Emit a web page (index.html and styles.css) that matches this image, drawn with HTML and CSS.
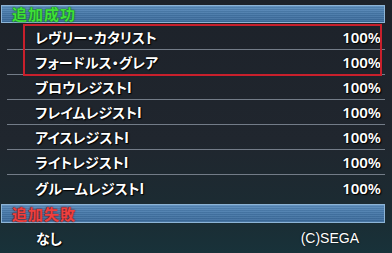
FILE: index.html
```html
<!DOCTYPE html>
<html lang="ja">
<head>
    <meta charset="UTF-8">
    <title>追加結果</title>
    <link rel="stylesheet" href="styles.css">
</head>
<body>
    <div class="panel">
        <div class="bar ok">追加成功</div>

        <div class="list">
            <div class="picked">
                <div class="row"><span class="name">レヴリー・カタリスト</span><span class="rate">100%</span></div>
                <div class="row"><span class="name">フォードルス・グレア</span><span class="rate">100%</span></div>
            </div>
            <div class="row"><span class="name">ブロウレジストI</span><span class="rate">100%</span></div>
            <div class="row"><span class="name">フレイムレジストI</span><span class="rate">100%</span></div>
            <div class="row"><span class="name">アイスレジストI</span><span class="rate">100%</span></div>
            <div class="row"><span class="name">ライトレジストI</span><span class="rate">100%</span></div>
            <div class="row last"><span class="name">グルームレジストI</span><span class="rate">100%</span></div>
        </div>

        <div class="bar ng">追加失敗</div>

        <div class="foot">
            <span class="name">なし</span>
            <span class="copy">(C)SEGA</span>
        </div>
    </div>
</body>
</html>
```

FILE: styles.css
```css
body{
    margin: 0;
    width: 392px;
    height: 253px;
    overflow: hidden;
    background: linear-gradient(180deg, #1d222a 0%, #20262e 55%, #1b2c33 85%, #18323a 100%);
    font-family: "Noto Sans CJK JP", "Noto Sans", sans-serif;
    color: #fff;
}
.panel{
    padding-top: 5px;
}

/* section bars */
.bar{
    height: 16px;
    margin: 0 7px 0 1px;
    padding-left: 10px;
    border: 1px solid #8db4d6;
    background:
        repeating-linear-gradient(180deg, rgba(255,255,255,0.06) 0 1px, rgba(0,0,0,0.06) 1px 2px),
        linear-gradient(180deg, #5b8dbd 0%, #4577a8 50%, #3d6c9c 100%);
    font-size: 15px;
    font-weight: bold;
    line-height: 16px;
    letter-spacing: 1px;
}
.bar.ok{
    color: #3fe03a;
    text-shadow: 0 0 2px #1a7a18, 0 0 1px #0b3d0a;
}
.bar.ng{
    margin-top: 4px;
    height: 17px;
    line-height: 17px;
    color: #ee4040;
    text-shadow: 0 0 2px #7a1818, 0 0 1px #3d0a0a;
}

/* rows */
.list{
    margin: 2px 7px 0 7px;
}
.row{
    display: flex;
    justify-content: space-between;
    align-items: center;
    height: 24px;
    border-bottom: 1px solid #737c88;
    padding: 0 4px 0 28px;
}
.row.last{
    border-bottom: none;
    height: 25px;
}
.name{
    font-size: 14px;
    font-weight: bold;
    font-feature-settings: "palt";
    text-shadow: 1px 1px 1px #000, 0 0 2px #000;
}
.rate{
    font-family: "Noto Sans", sans-serif;
    font-size: 15px;
    font-weight: 600;
    text-shadow: 1px 1px 1px #000, 0 0 2px #000;
}

.picked{
    position: relative;
}
.picked::after{
    content: "";
    position: absolute;
    left: 16px;
    right: 3px;
    top: -1px;
    bottom: -1px;
    border: 2px solid #c8202c;
}

.foot{
    display: flex;
    justify-content: space-between;
    align-items: center;
    height: 30px;
    padding: 0 33px 0 36px;
}
.copy{
    font-family: "Liberation Sans", sans-serif;
    font-size: 14px;
    text-shadow: 0 0 2px #000;
}
```
